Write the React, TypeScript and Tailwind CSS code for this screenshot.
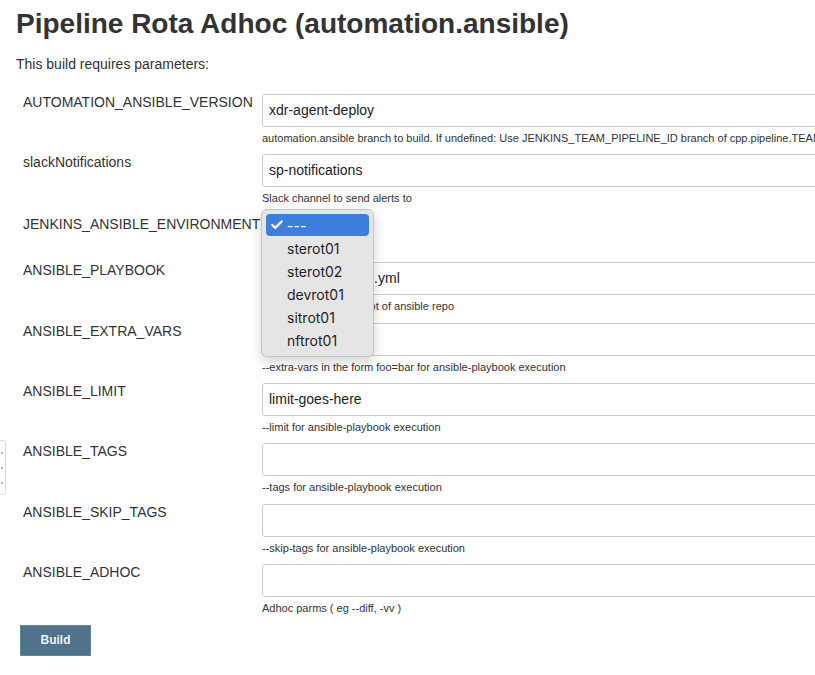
import { Check } from "lucide-react";

type Param = {
  name: string;
  value?: string;
  desc?: string;
  select?: boolean;
};

const params: Param[] = [
  {
    name: "AUTOMATION_ANSIBLE_VERSION",
    value: "xdr-agent-deploy",
    desc: "automation.ansible branch to build. If undefined: Use JENKINS_TEAM_PIPELINE_ID branch of cpp.pipeline.TEAMS repository",
  },
  { name: "slackNotifications", value: "sp-notifications", desc: "Slack channel to send alerts to" },
  { name: "JENKINS_ANSIBLE_ENVIRONMENT", select: true },
  { name: "ANSIBLE_PLAYBOOK", value: "playbooks/adhoc.yml", desc: "Playbook path from root of ansible repo" },
  { name: "ANSIBLE_EXTRA_VARS", value: "", desc: "--extra-vars in the form foo=bar for ansible-playbook execution" },
  { name: "ANSIBLE_LIMIT", value: "limit-goes-here", desc: "--limit for ansible-playbook execution" },
  { name: "ANSIBLE_TAGS", value: "", desc: "--tags for ansible-playbook execution" },
  { name: "ANSIBLE_SKIP_TAGS", value: "", desc: "--skip-tags for ansible-playbook execution" },
  { name: "ANSIBLE_ADHOC", value: "", desc: "Adhoc parms ( eg --diff, -vv )" },
];

const options = ["sterot01", "sterot02", "devrot01", "sitrot01", "nftrot01"];

const ParamRow = ({ p }: { p: Param }) => {
  if (p.select) {
    return (
      <div className="flex h-[47.5px]">
        <div className="w-[239px] shrink-0 leading-[16px] pt-[1px]">{p.name}</div>
        <div className="pt-[2px]">
          <div className="w-[100px] h-[24px] border border-[#ccc] rounded-[3px] bg-white" />
        </div>
      </div>
    );
  }
  return (
    <div className="flex">
      <div className="w-[239px] shrink-0 leading-[16px]">{p.name}</div>
      <div className="min-w-0">
        <div className="w-[600px] h-[33px] border border-[#ccc] rounded-[3px] bg-white px-[6px] flex items-center text-[14px] text-[#222]">
          {p.value}
        </div>
        <div className="w-[553px] overflow-hidden text-[11px] leading-[14px] mt-[4px] mb-[9.4px] whitespace-nowrap text-[#333]">
          {p.desc}
        </div>
      </div>
    </div>
  );
};

export default function App() {
  return (
    <div
      className="relative w-[815px] h-[675px] overflow-hidden bg-white text-[#333] text-[14px]"
      style={{ fontFamily: '"Liberation Sans", Arial, sans-serif' }}
    >
      <h1 className="pl-[16px] mt-[8px] text-[28px] leading-[32px] font-bold text-[#333] whitespace-nowrap">
        Pipeline Rota Adhoc (automation.ansible)
      </h1>
      <p className="pl-[16px] mt-[16px] leading-[16px]">This build requires parameters:</p>

      <div className="pl-[23px] mt-[22px]">
        {params.map((p) => (
          <ParamRow key={p.name} p={p} />
        ))}
      </div>

      <div className="pl-[20px]">
        <button className="w-[71px] h-[31px] bg-[#4e738a] border border-[#5d879e] text-[#eef2f4] text-[12px] font-bold">
          Build
        </button>
      </div>

      {/* side panel handle */}
      <div className="absolute -left-[2px] top-[440px] w-[8px] h-[55px] border border-[#ddd] rounded-r-[3px] bg-white flex flex-col items-center justify-around py-[4px]">
        <span className="w-[2px] h-[2px] bg-[#999] rounded-full" />
        <span className="w-[2px] h-[2px] bg-[#999] rounded-full" />
        <span className="w-[2px] h-[2px] bg-[#999] rounded-full" />
      </div>

      {/* open select menu */}
      <div
        className="absolute left-[261px] top-[209px] w-[113px] h-[148px] rounded-[6px] bg-[#e6e5e5] border border-[#c6c6c6] shadow-[0_4px_12px_rgba(0,0,0,0.18)] p-[4px] text-[14px] text-[#1f1f1f]"
        style={{ fontFamily: 'Inter, "Liberation Sans", sans-serif' }}
      >
        <div className="h-[22px] mb-[1px] rounded-[4px] bg-[#3e7ede] text-white flex items-center pl-[4px]">
          <Check className="w-[14px] h-[14px]" strokeWidth={4} />
          <span className="ml-[3px]">---</span>
        </div>
        {options.map((o) => (
          <div key={o} className="h-[23px] flex items-center pl-[21px]">
            {o}
          </div>
        ))}
      </div>
    </div>
  );
}
